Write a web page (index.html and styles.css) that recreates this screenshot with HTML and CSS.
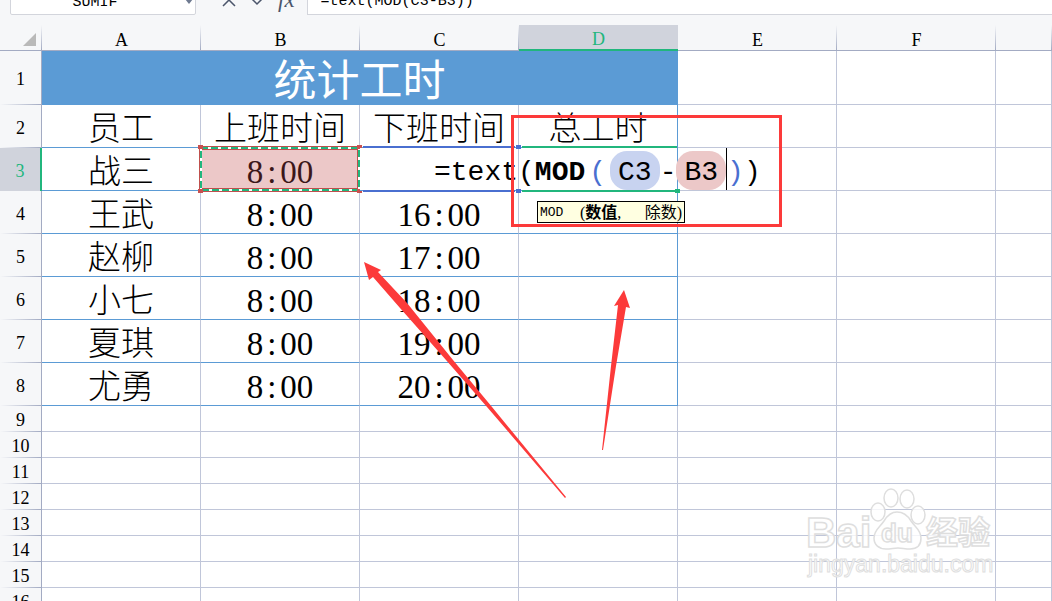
FILE: index.html
```
<!doctype html>
<html lang="zh-CN">
  <head>
    <meta charset="UTF-8" />
    <meta name="viewport" content="width=device-width, initial-scale=1.0" />
    <title>统计工时</title>
    <link rel="stylesheet" href="styles.css">
  </head>

  <body>
    <header class="toolbar">
      <div class="name-box">
        <input type="text" aria-label="名称框" value="SUMIF" />
        <svg class="name-arrow" viewBox="0 0 8 6"><path d="M0 0h8L4 5z" /></svg>
      </div>
      <div class="actions">
        <button type="button" aria-label="取消">
          <svg viewBox="0 0 14 14"><path d="M1 1l12 12M13 1L1 13" /></svg>
        </button>
        <button type="button" aria-label="输入">
          <svg viewBox="0 0 14 14"><path d="M1 5l6 6 6-6" /></svg>
        </button>
        <button type="button" class="fx" aria-label="插入函数">fx</button>
      </div>
      <input class="formula-bar" type="text" aria-label="编辑栏" value="=text(MOD(C3-B3))" />
    </header>

    <main class="sheet">
      <table>
        <colgroup>
          <col class="col-num" />
          <col class="col-data" span="6" />
          <col />
        </colgroup>
        <thead>
          <tr>
            <th class="corner"><svg viewBox="0 0 13 13"><path d="M13 0v13H0z" /></svg></th>
            <th scope="col">A</th>
            <th scope="col">B</th>
            <th scope="col">C</th>
            <th scope="col" class="active">D</th>
            <th scope="col">E</th>
            <th scope="col">F</th>
            <th scope="col"></th>
          </tr>
        </thead>
        <tbody>
          <tr class="title-row">
            <th scope="row">1</th>
            <td class="title" colspan="4">统计工时</td>
            <td></td><td></td><td></td>
          </tr>
          <tr class="data">
            <th scope="row">2</th>
            <td>员工</td>
            <td>上班时间</td>
            <td>下班时间</td>
            <td>总工时</td>
            <td></td><td></td><td></td>
          </tr>
          <tr class="data editing">
            <th scope="row" class="active">3</th>
            <td>战三</td>
            <td class="picked">
              8<i>:</i>00
              <svg class="ants">
                <rect class="ants-edge" x="-1" y="-1" width="100%" height="100%" />
                <rect class="ants-edge" x="-1" y="1" width="100%" height="100%" />
                <rect class="ants-base" width="100%" height="100%" />
                <rect class="ants-dash" width="100%" height="100%" />
              </svg>
              <span class="handle red top left"></span>
              <span class="handle red top right"></span>
              <span class="handle red bottom left"></span>
              <span class="handle red bottom right"></span>
            </td>
            <td>
              <div class="ref-box blue"></div>
            </td>
            <td>
              <div class="ref-box green"></div>
              <span class="handle blue top left"></span>
              <span class="handle blue bottom left"></span>
              <span class="handle green bottom right"></span>
              <div class="editor">=text(<b>MOD</b><span class="paren">(</span><span class="ref ref-c">C3</span>-<span class="ref ref-b">B3</span><span class="caret"></span><span class="paren-end">)</span>)</div>
              <div class="tooltip" role="tooltip"><span class="fn">MOD</span> <span>(</span><b>数值</b>,<span class="arg">除数)</span></div>
            </td>
            <td></td><td></td><td></td>
          </tr>
          <tr class="data">
            <th scope="row">4</th>
            <td>王武</td>
            <td>8<i>:</i>00</td>
            <td>16<i>:</i>00</td>
            <td></td><td></td><td></td><td></td>
          </tr>
          <tr class="data">
            <th scope="row">5</th>
            <td>赵柳</td>
            <td>8<i>:</i>00</td>
            <td>17<i>:</i>00</td>
            <td></td><td></td><td></td><td></td>
          </tr>
          <tr class="data">
            <th scope="row">6</th>
            <td>小七</td>
            <td>8<i>:</i>00</td>
            <td>18<i>:</i>00</td>
            <td></td><td></td><td></td><td></td>
          </tr>
          <tr class="data">
            <th scope="row">7</th>
            <td>夏琪</td>
            <td>8<i>:</i>00</td>
            <td>19<i>:</i>00</td>
            <td></td><td></td><td></td><td></td>
          </tr>
          <tr class="data">
            <th scope="row">8</th>
            <td>尤勇</td>
            <td>8<i>:</i>00</td>
            <td>20<i>:</i>00</td>
            <td></td><td></td><td></td><td></td>
          </tr>
          <tr><th scope="row">9</th><td></td><td></td><td></td><td></td><td></td><td></td><td></td></tr>
          <tr><th scope="row">10</th><td></td><td></td><td></td><td></td><td></td><td></td><td></td></tr>
          <tr><th scope="row">11</th><td></td><td></td><td></td><td></td><td></td><td></td><td></td></tr>
          <tr><th scope="row">12</th><td></td><td></td><td></td><td></td><td></td><td></td><td></td></tr>
          <tr><th scope="row">13</th><td></td><td></td><td></td><td></td><td></td><td></td><td></td></tr>
          <tr><th scope="row">14</th><td></td><td></td><td></td><td></td><td></td><td></td><td></td></tr>
          <tr><th scope="row">15</th><td></td><td></td><td></td><td></td><td></td><td></td><td></td></tr>
          <tr><th scope="row">16</th><td></td><td></td><td></td><td></td><td></td><td></td><td></td></tr>
        </tbody>
      </table>
    </main>

    <!-- Annotations -->
    <svg class="marks" width="1052" height="601" viewBox="0 0 1052 601">
      <rect class="mark-box" x="512.5" y="116.5" width="268" height="109" />
      <path d="M364 262L381 270L378 272L407 303L453 360L492 407L566 497L565 498L487 407L446 360L400 308L373 277L369 280Z" />
      <path d="M624 290L630 308L626 307L616 366L603 450H602L611 366L618 305L614 306Z" />
    </svg>

    <!-- Watermark -->
    <svg class="watermark" width="200" height="100" viewBox="800 485 200 100">
      <text class="wm-logo" x="806" y="547">Bai</text>
      <path d="M897 512c-6 0-10 4-13 9-4 6-10 9-10 17 0 7 5 11 12 11 5 0 8-1 12-1s7 1 12 1c7 0 11-4 11-11 0-8-6-11-10-17-3-5-8-9-14-9z" />
      <ellipse cx="878" cy="512" rx="7" ry="9" />
      <ellipse cx="891" cy="498" rx="7" ry="9" />
      <ellipse cx="907" cy="499" rx="7" ry="9" />
      <ellipse cx="918" cy="515" rx="7" ry="9" />
      <text class="wm-du" x="881" y="542">du</text>
      <text class="wm-cn" x="926" y="544">经验</text>
      <text class="wm-url" x="808" y="572">jingyan.baidu.com</text>
    </svg>
  </body>
</html>
```

FILE: styles.css
```
* {
  box-sizing: border-box;
}
body {
  margin: 0;
  height: 100vh;
  position: relative;
  overflow: hidden;
  display: flex;
  flex-direction: column;
  background: #f6f7f9;
  color: #000;
  font-family: "Liberation Serif", "Noto Sans CJK SC", serif;
}

/* Toolbar, scrolled partly out of view */
.toolbar {
  display: flex;
  align-items: flex-end;
  height: 15px;
  margin-bottom: 10px;
  padding-left: 10px;
  overflow: hidden;
}
.toolbar input {
  height: 30px;
  border: 1px solid #d3d5dc;
  background: #fff;
  font-family: "Liberation Mono", monospace;
  font-size: 15px;
}
.name-box {
  position: relative;
  width: 186px;
}
.name-box input {
  display: block;
  width: 100%;
  padding: 4px 16px 0 0;
  border-radius: 2px;
  text-align: center;
}
.name-arrow {
  position: absolute;
  right: 3px;
  bottom: 10px;
  width: 8px;
  height: 6px;
  fill: #6f7a90;
}
.actions {
  display: flex;
  align-items: center;
  gap: 14px;
  height: 30px;
  margin: 0 12px 0 26px;
}
.actions button {
  display: flex;
  padding: 0;
  border: 0;
  background: none;
  color: #4b556b;
}
.actions svg {
  width: 14px;
  height: 14px;
  fill: none;
  stroke: #4b556b;
  stroke-width: 1.5;
}
.actions .fx {
  font: italic 23px/30px "Liberation Serif", serif;
}
.toolbar .formula-bar {
  flex: 1;
  min-width: 0;
  padding: 2px 13px 0;
  border-right: 0;
}

/* Sheet */
.sheet {
  flex: 1;
  min-height: 0;
  overflow: hidden;
}
table {
  width: 100%;
  table-layout: fixed;
  border-collapse: separate;
  border-spacing: 0;
}
.col-num {
  width: 42px;
}
.col-data {
  width: 159px;
}
tr {
  height: 26px;
}
th,
td {
  position: relative;
  padding: 0;
  text-align: center;
  white-space: nowrap;
}
th {
  font-size: 18px;
  line-height: 20px;
  font-weight: normal;
}
td {
  background: #fff;
  border-right: 1px solid #c0c6d9;
  border-bottom: 1px solid #c0c6d9;
}
thead th {
  padding-top: 4px;
  border-bottom: 1px solid #a3abc3;
  background: linear-gradient(#f6f7f9, #a3abc3) right / 1px 100% no-repeat;
}
tbody th {
  padding-top: 2px;
  border-right: 1px solid #a3abc3;
  background: linear-gradient(to right, #f6f7f9, #a3abc3) bottom / 100% 1px no-repeat;
}
thead .active {
  border-bottom: 2px solid #21b67d;
  background: #d0d3dc;
  color: #21b67d;
}
tbody .active {
  border-right: 2px solid #21b67d;
  background: #d0d3dc;
  color: #21b67d;
}
.corner svg {
  display: block;
  width: 13px;
  height: 13px;
  margin-left: 23px;
  fill: #b9b9b9;
}
.title-row {
  height: 54px;
}
.title {
  padding-top: 8px;
  border-color: #5b9bd5;
  background: #5b9bd5;
  color: #fff;
  font-size: 43px;
  line-height: 44px;
}
.data {
  height: 43px;
}
.data td {
  padding-top: 6px;
  font-size: 33px;
  line-height: 36px;
  font-weight: 300;
}
.data td:nth-child(-n + 5) {
  border-bottom-color: #5b9bd5;
}
.data td:nth-child(5) {
  border-right-color: #5b9bd5;
}
.data i {
  display: inline-block;
  width: 17px;
  font-style: normal;
}

/* Referenced cells */
.editing td:nth-child(-n + 5) {
  z-index: 1;
}
.data .picked {
  background: #ecc8c8;
  color: #3c171a;
}
.ants {
  position: absolute;
  inset: 0;
  width: 100%;
  height: 100%;
  overflow: visible;
  fill: none;
  stroke-width: 2;
}
.ants-edge {
  stroke: #c0504d;
}
.ants-base {
  stroke: #fff;
}
.ants-dash {
  stroke: #21b67d;
  stroke-dasharray: 7 3;
}
.ref-box {
  position: absolute;
  inset: -2px 3px;
  border: solid;
  border-width: 2px 0;
}
.ref-box.blue {
  color: #4a6fd0;
}
.ref-box.green {
  right: 0;
  color: #21b67d;
}
.handle {
  position: absolute;
  width: 5px;
  height: 4px;
  background: currentColor;
}
.handle.red {
  color: #c9504f;
}
.handle.blue {
  color: #4a6fd0;
}
.handle.green {
  color: #21b67d;
}
.handle.top {
  top: -3px;
}
.handle.bottom {
  bottom: -3px;
}
.handle.left {
  left: -3px;
}
.handle.right {
  right: -3px;
}

/* In-cell editor */
.editor {
  position: absolute;
  z-index: 1;
  top: 0;
  left: -85px;
  display: flex;
  align-items: flex-end;
  font-family: "Liberation Mono", monospace;
  font-size: 28px;
  line-height: 35px;
  font-weight: normal;
}
.paren,
.paren-end {
  color: #4a6fd0;
}
.paren {
  margin: 0 4px;
}
.ref {
  padding: 4px 8px 0;
  border-radius: 17px;
}
.ref-c {
  background: #c8d3f0;
}
.ref-b {
  background: #ecc8c8;
}
.caret {
  width: 1px;
  height: 42px;
  background: #000;
}
.tooltip {
  position: absolute;
  z-index: 1;
  top: 53px;
  left: 18px;
  display: flex;
  width: 148px;
  height: 22px;
  padding: 0 2px;
  border: 1px solid #000;
  background: #ffffe1;
  font-size: 16px;
  line-height: 21px;
  font-weight: normal;
}
.tooltip .fn {
  width: 40px;
  font-family: "Liberation Mono", monospace;
  font-size: 13px;
  text-align: left;
}
.tooltip .arg {
  margin-left: auto;
}

/* Overlays */
.marks {
  position: absolute;
  top: 0;
  left: 0;
  z-index: 2;
  fill: #fc3a3a;
  pointer-events: none;
}
.mark-box {
  fill: none;
  stroke: #fc3a3a;
  stroke-width: 3;
}
.watermark {
  position: absolute;
  right: 52px;
  bottom: 16px;
  z-index: 2;
  fill: #fff;
  fill-opacity: 0.8;
  stroke: #dedede;
  stroke-width: 1.5;
  font-family: "Liberation Sans", "Noto Sans CJK SC", sans-serif;
  pointer-events: none;
}
.wm-logo {
  font-size: 42px;
  font-weight: bold;
}
.wm-du {
  font-size: 26px;
  font-weight: bold;
}
.wm-cn {
  font-size: 32px;
  font-weight: bold;
}
.wm-url {
  font-size: 23px;
  stroke-width: 1;
}
```
